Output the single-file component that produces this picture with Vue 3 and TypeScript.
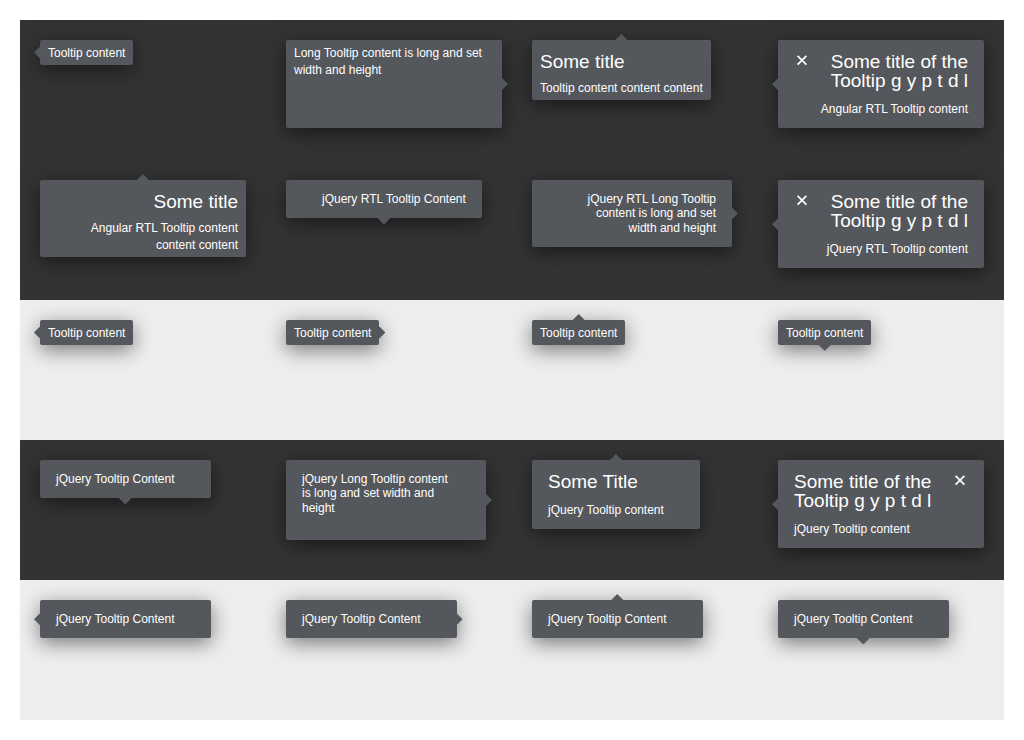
<script setup lang="ts">
type Arrow = 'left' | 'right' | 'top' | 'bottom'

interface Tip {
  kind: 'compact' | 'roomy'
  arrow: Arrow
  text: string
  title?: string
  rtl?: boolean
  closable?: boolean
  long?: boolean
  tall?: boolean
}

interface Band {
  tone: 'dark' | 'light'
  tips: Tip[]
}

const arrows: Arrow[] = ['left', 'right', 'top', 'bottom']
const longTitle = 'Some title of the Tooltip g y p t d l'

const bands: Band[] = [
  {
    tone: 'dark',
    tips: [
      { kind: 'compact', arrow: 'left', text: 'Tooltip content' },
      { kind: 'compact', arrow: 'right', text: 'Long Tooltip content is long and set width and height', long: true, tall: true },
      { kind: 'compact', arrow: 'top', title: 'Some title', text: 'Tooltip content content content' },
      { kind: 'roomy', arrow: 'left', title: longTitle, text: 'Angular RTL Tooltip content', rtl: true, closable: true },
      { kind: 'compact', arrow: 'top', title: 'Some title', text: 'Angular RTL Tooltip content content content', rtl: true },
      { kind: 'roomy', arrow: 'bottom', text: 'jQuery RTL Tooltip Content', rtl: true },
      { kind: 'roomy', arrow: 'right', text: 'jQuery RTL Long Tooltip content is long and set width and height', rtl: true, long: true },
      { kind: 'roomy', arrow: 'left', title: longTitle, text: 'jQuery RTL Tooltip content', rtl: true, closable: true },
    ],
  },
  {
    tone: 'light',
    tips: arrows.map((arrow): Tip => ({ kind: 'compact', arrow, text: 'Tooltip content' })),
  },
  {
    tone: 'dark',
    tips: [
      { kind: 'roomy', arrow: 'bottom', text: 'jQuery Tooltip Content' },
      { kind: 'roomy', arrow: 'right', text: 'jQuery Long Tooltip content is long and set width and height', long: true, tall: true },
      { kind: 'roomy', arrow: 'top', title: 'Some Title', text: 'jQuery Tooltip content' },
      { kind: 'roomy', arrow: 'left', title: longTitle, text: 'jQuery Tooltip content', closable: true },
    ],
  },
  {
    tone: 'light',
    tips: arrows.map((arrow): Tip => ({ kind: 'roomy', arrow, text: 'jQuery Tooltip Content' })),
  },
]
</script>

<template>
  <main class="page">
    <section v-for="(band, b) in bands" :key="b" class="band" :class="band.tone">
      <div v-for="(tip, t) in band.tips" :key="t" class="cell">
        <div
          class="tooltip"
          :class="[tip.kind, `arrow-${tip.arrow}`, { long: tip.long, tall: tip.tall, rtl: tip.rtl }]"
          :dir="tip.rtl ? 'rtl' : 'ltr'"
          role="tooltip"
        >
          <h3 v-if="tip.title" class="title">{{ tip.title }}</h3>
          <p class="text">{{ tip.text }}</p>
          <button v-if="tip.closable" class="close" type="button" aria-label="Close">
            <svg viewBox="0 0 16 16" width="16" height="16" aria-hidden="true">
              <path d="M3.6 3.8 12.4 12.6M12.4 3.8 3.6 12.6" fill="none" stroke="currentColor" stroke-width="1.7" />
            </svg>
          </button>
        </div>
      </div>
    </section>
  </main>
</template>

<style>
body {
  margin: 0;
  background: #fff;
}
</style>

<style scoped>
.page {
  padding: 20px;
  font-family: "Liberation Sans", Arial, sans-serif;
  font-size: 12px;
  color: #fff;
}

.band {
  display: grid;
  grid-template-columns: repeat(4, minmax(0, 1fr));
  grid-auto-rows: minmax(140px, auto);
}

.dark {
  background: #333;
}

.light {
  background: #eee;
}

.cell {
  padding: 20px;
}

.tooltip {
  position: relative;
  box-sizing: border-box;
  width: fit-content;
  border-radius: 2px;
  background: #54575b;
  box-shadow: 0 5px 20px rgba(0, 0, 0, 0.5);
}

.title {
  margin: 0;
  font-size: 19px;
  font-weight: 400;
  line-height: 19px;
}

.text {
  margin: 0;
}

.compact {
  padding: 5px 8px 3px;
  line-height: 17px;
}

.compact.rtl {
  padding-inline-end: 24px;
}

.compact .title {
  margin: 7px 0 9px;
}

.compact.long {
  width: 216px;
}

.compact.tall {
  min-height: 88px;
}

.roomy {
  padding-block: 12px;
  padding-inline: 16px 36px;
  line-height: 1.2;
}

.roomy .title {
  margin-bottom: 12px;
}

.roomy.long {
  width: 200px;
}

.roomy.tall {
  min-height: 80px;
}

.close {
  position: absolute;
  top: 12px;
  inset-inline-end: 16px;
  width: 16px;
  height: 16px;
  padding: 0;
  border: 0;
  background: none;
  color: inherit;
  cursor: pointer;
}

.close svg {
  display: block;
}

/* Each arrow reaches 1px under the body so that no seam shows. */
.tooltip::after {
  content: "";
  position: absolute;
  background: #54575b;
}

.arrow-left::after,
.arrow-right::after {
  top: calc(50% - 6px);
  width: 7px;
  height: 12px;
}

.arrow-top::after,
.arrow-bottom::after {
  left: calc(50% - 6px);
  width: 12px;
  height: 7px;
}

.arrow-left::after {
  left: -6px;
  clip-path: polygon(6px 0, 100% 0, 100% 100%, 6px 100%, 0 50%);
}

.arrow-right::after {
  right: -6px;
  clip-path: polygon(0 0, 1px 0, 100% 50%, 1px 100%, 0 100%);
}

.arrow-top::after {
  top: -6px;
  clip-path: polygon(0 100%, 0 6px, 50% 0, 100% 6px, 100% 100%);
}

.arrow-bottom::after {
  bottom: -6px;
  clip-path: polygon(0 0, 100% 0, 100% 1px, 50% 100%, 0 1px);
}
</style>
